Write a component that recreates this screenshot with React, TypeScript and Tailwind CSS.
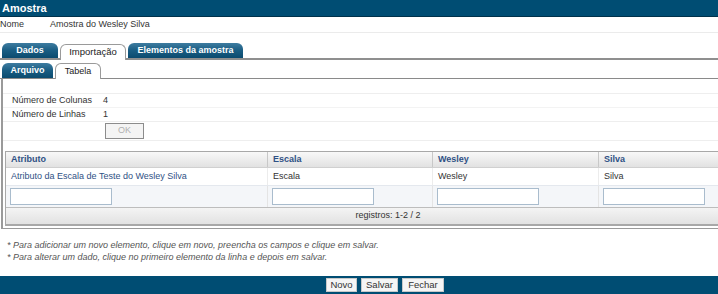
import React from "react";

const columns = [
  { key: "atributo", label: "Atributo", value: "Atributo da Escala de Teste do Wesley Silva", link: true, width: "w-[262px]" },
  { key: "escala", label: "Escala", value: "Escala", link: false, width: "w-[165px]" },
  { key: "wesley", label: "Wesley", value: "Wesley", link: false, width: "w-[166px]" },
  { key: "silva", label: "Silva", value: "Silva", link: false, width: "w-[165px]" },
];

function Btn({ label, w }: { label: string; w: string }) {
  return (
    <button className={`${w} h-[14px] flex items-center justify-center bg-[#f5f5f5] border border-[#c8c8c8] text-[#333] text-[9.5px]`}>
      {label}
    </button>
  );
}

export default function App() {
  return (
    <div className="w-[718px] h-[294px] overflow-hidden bg-white">
      <div className="w-[770px] h-[294px] flex flex-col font-['Liberation_Sans',Arial,sans-serif] text-[9px] text-[#333]">
        {/* title */}
        <div className="h-[17px] shrink-0 bg-[#004d73] border-b border-[#00324b] flex items-center px-[2px]">
          <span className="text-white font-bold text-[11px]">Amostra</span>
        </div>

        <div className="h-[16px] shrink-0 flex items-center border-b border-[#ebebeb]">
          <span className="w-[50px]">Nome</span>
          <span>Amostra do Wesley Silva</span>
        </div>

        {/* main tabs */}
        <div className="mt-[10px] shrink-0 flex items-end gap-[2px] pl-[2px] border-b-2 border-[#8f8f8f]">
          <div className="w-[56px] h-[15px] flex items-center justify-center rounded-t-[6px] bg-gradient-to-b from-[#3d7ca0] via-[#195d83] to-[#0b4b6f] text-white font-bold">
            Dados
          </div>
          <div className="w-[66px] h-[16px] -mb-[2px] flex items-center justify-center rounded-t-[6px] border border-b-0 border-[#9a9a9a] bg-white text-[#222] text-[9.5px]">
            Importação
          </div>
          <div className="w-[115px] h-[15px] flex items-center justify-center rounded-t-[6px] bg-gradient-to-b from-[#3d7ca0] via-[#195d83] to-[#0b4b6f] text-white font-bold">
            Elementos da amostra
          </div>
        </div>

        {/* sub tabs */}
        <div className="mt-[3px] shrink-0 flex items-end gap-[2px] pl-[2px] border-b border-[#8a8a8a]">
          <div className="w-[51px] h-[15px] flex items-center justify-center rounded-t-[6px] bg-gradient-to-b from-[#3d7ca0] via-[#195d83] to-[#0b4b6f] text-white font-bold">
            Arquivo
          </div>
          <div className="w-[46px] h-[16px] -mb-px flex items-center justify-center rounded-t-[6px] border border-b-0 border-[#9a9a9a] bg-white text-[#222]">
            Tabela
          </div>
        </div>

        {/* content */}
        <div className="shrink-0 ml-[1px] border-l-2 border-b border-[#9a9a9a] pb-[2px]">
          <div className="h-[15px] border-b border-[#eeeeee]" />
          <div className="h-[14px] flex items-center border-b border-[#f3f3f3]">
            <span className="w-[100px] pl-[9px]">Número de Colunas</span>
            <span>4</span>
          </div>
          <div className="h-[14px] flex items-center border-b border-[#eeeeee]">
            <span className="w-[100px] pl-[9px]">Número de Linhas</span>
            <span>1</span>
          </div>
          <div className="h-[19px] flex items-center border-b border-[#eeeeee] pl-[102px]">
            <div className="w-[39px] h-[16px] flex items-center justify-center border border-[#8c8c8c] bg-[#f4f4f4] text-[#b0b0b0]">
              OK
            </div>
          </div>

          <div className="mt-[10px] ml-[2px] border-t border-l border-b-2 border-[#a8a8a8]">
            <div className="flex h-[16px] bg-gradient-to-b from-[#f8f8f8] to-[#e2e2e2] border-b border-[#d0d0d0]">
              {columns.map((c) => (
                <div key={c.key} className={`${c.width} flex items-center pl-[5px] border-r border-[#c8c8c8] font-bold text-[#2f5185]`}>
                  {c.label}
                </div>
              ))}
            </div>
            <div className="flex h-[17px] bg-white">
              {columns.map((c) => (
                <div key={c.key} className={`${c.width} flex items-center pl-[5px] border-r border-[#ececec] ${c.link ? "text-[#2f5185]" : "text-[#333]"}`}>
                  {c.value}
                </div>
              ))}
            </div>
            <div className="flex h-[22px] bg-[#f4f6f9] border-t border-[#e4e8ee]">
              {columns.map((c) => (
                <div key={c.key} className={`${c.width} flex items-center pl-[4px] border-r border-[#e4e4e4]`}>
                  <div className="w-[102px] h-[17px] bg-white border border-[#a9bccd]" />
                </div>
              ))}
            </div>
            <div className="h-[17px] flex items-center justify-center bg-gradient-to-b from-[#f4f4f4] to-[#e2e2e2] border-t border-[#bdbdbd] text-[#333]">
              registros: 1-2 / 2
            </div>
          </div>
        </div>

        {/* notes */}
        <div className="mt-[10px] pl-[7px] italic text-[#555] leading-[12px]">
          <p>* Para adicionar um novo elemento, clique em novo, preencha os campos e clique em salvar.</p>
          <p>* Para alterar um dado, clique no primeiro elemento da linha e depois em salvar.</p>
        </div>

        {/* footer */}
        <div className="mt-auto h-[18px] shrink-0 bg-[#004d73] flex items-center justify-center gap-[4px]">
          <Btn label="Novo" w="w-[31px]" />
          <Btn label="Salvar" w="w-[37px]" />
          <Btn label="Fechar" w="w-[42px]" />
        </div>
      </div>
    </div>
  );
}
